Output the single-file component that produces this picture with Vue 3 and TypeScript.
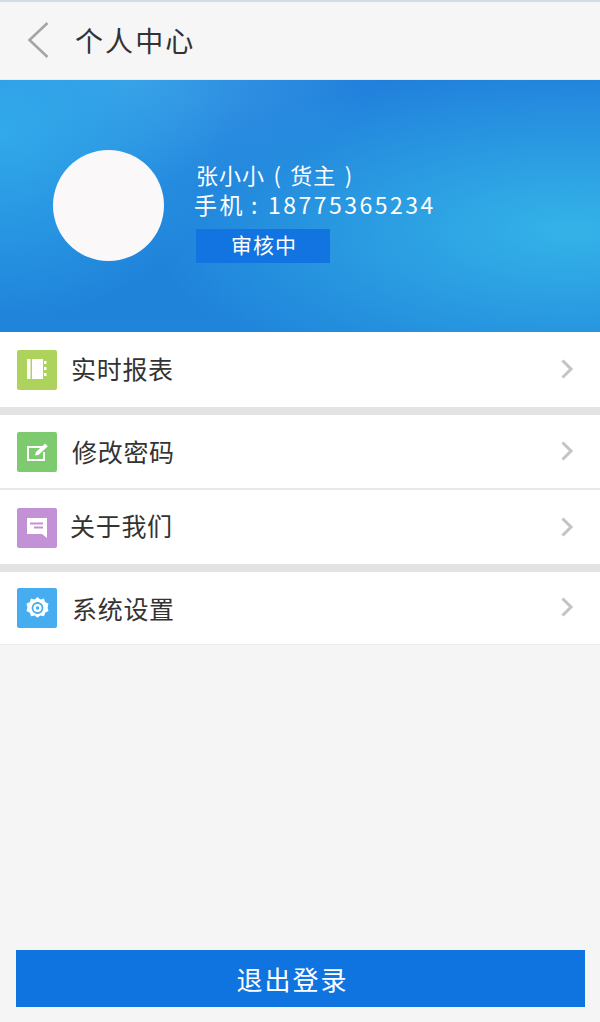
<template>
  <div class="page">
    <header class="topbar">
      <svg class="back" width="24" height="38" viewBox="0 0 24 38">
        <path d="M21.5 2 L3.5 19 L21.5 36" fill="none" stroke="#a3a6a6" stroke-width="2.6" />
      </svg>
      <h1 class="title">个人中心</h1>
    </header>

    <section class="hero">
      <div class="avatar"></div>
      <div class="info">
        <div class="name">张小小 ( 货主 )</div>
        <div class="phone">手机<span class="colon">:</span>18775365234</div>
        <div class="status">审核中</div>
      </div>
    </section>

    <ul class="menu">
      <li v-for="item in items" :key="item.label" class="row" :class="item.rowClass">
        <span class="icon" :style="{ background: item.color }">
          <svg v-if="item.icon === 'book'" width="40" height="40" viewBox="0 0 40 40">
            <path d="M10 9h3.500v20H10z M15 9h11v20H15z" fill="#fff" />
            <path d="M27 11h2.500v3H27z M27 17h2.500v3H27z M27 23h2.500v3H27z" fill="#fff" />
          </svg>
          <svg v-else-if="item.icon === 'edit'" width="40" height="40" viewBox="0 0 40 40">
            <path d="M25 15H11v13h16v-8" fill="none" stroke="#fff" stroke-width="2" />
            <path d="M18 23.500l1-3.500 9-8.500 2.800 2.700-9 8.500z" fill="#fff" />
          </svg>
          <svg v-else-if="item.icon === 'chat'" width="40" height="40" viewBox="0 0 40 40">
            <path d="M10 10h20v20l-5-4H10z" fill="#fff" />
            <path d="M13 14.500h13v2H13z M17 18.500h9v2h-9z" fill="#c391d6" />
          </svg>
          <svg v-else width="40" height="40" viewBox="0 0 40 40">
            <path d="M20.500 9l2.800 2.400 3.700-.9 1.100 3.600 3.400 1.600-.9 3.700.9 3.700-3.400 1.600-1.100 3.600-3.700-.9-2.800 2.400-2.800-2.400-3.700.9-1.100-3.600-3.400-1.600.9-3.700-.9-3.700 3.400-1.600 1.100-3.600 3.700.9z" fill="#fff" />
            <circle cx="20.500" cy="20" r="5" fill="none" stroke="#46aef0" stroke-width="1.800" />
            <circle cx="20.500" cy="20" r="1.700" fill="#46aef0" />
          </svg>
        </span>
        <span class="label" :style="{ marginLeft: item.gap + 'px', paddingBottom: item.lift + 'px' }">{{ item.label }}</span>
        <svg class="chevron" width="14" height="22" viewBox="0 0 14 22">
          <path d="M2.500 2.500L11 11l-8.500 8.500" fill="none" stroke="#c4c4c4" stroke-width="3" />
        </svg>
      </li>
    </ul>

    <div class="footer">
      <button class="logout" type="button">退出登录</button>
    </div>
  </div>
</template>

<script setup lang="ts">
interface MenuItem {
  label: string
  icon: 'book' | 'edit' | 'chat' | 'gear'
  color: string
  gap: number
  lift: number
  rowClass: string
}

const items: MenuItem[] = [
  { label: '实时报表', icon: 'book', color: '#aed35d', gap: 14, lift: 4, rowClass: 'row-first' },
  { label: '修改密码', icon: 'edit', color: '#7dcb6e', gap: 15, lift: 2, rowClass: 'row-second' },
  { label: '关于我们', icon: 'chat', color: '#c391d6', gap: 13, lift: 6, rowClass: 'row-third' },
  { label: '系统设置', icon: 'gear', color: '#46aef0', gap: 15, lift: 0, rowClass: 'row-last' },
]
</script>

<style>
html,
body {
  margin: 0;
  background: #f5f5f5;
}
</style>

<style scoped>
.page {
  display: flex;
  flex-direction: column;
  height: 1022px;
  overflow: hidden;
  background: #f5f5f5;
  font-family: "Noto Sans CJK SC", "Liberation Sans", sans-serif;
}

.topbar {
  display: flex;
  align-items: center;
  box-sizing: border-box;
  height: 80px;
  padding-left: 26px;
  padding-bottom: 1px;
  background: #f6f6f6;
  border-top: 2px solid #d3dde3;
  border-bottom: 1px solid #e8eff5;
}

.back {
  flex: none;
}

.title {
  margin: 0 0 0 25px;
  font-size: 28px;
  font-weight: 400;
  letter-spacing: 2.1px;
  color: #333;
}

.hero {
  display: flex;
  align-items: flex-start;
  box-sizing: border-box;
  height: 252px;
  padding: 70px 0 0 53px;
  background:
    radial-gradient(ellipse 420px 165px at 570px 150px, #34b3e8 0%, rgba(52, 179, 232, 0) 100%),
    radial-gradient(ellipse 230px 190px at 0 50px, #31aaea 0%, rgba(49, 170, 234, 0) 100%),
    radial-gradient(ellipse 240px 110px at 130px 0, #3a9de6 0%, rgba(58, 157, 230, 0) 100%),
    linear-gradient(180deg, #2180dc 0%, #1f84da 100%);
}

.avatar {
  flex: none;
  width: 111px;
  height: 111px;
  border-radius: 50%;
  background: #fbf8fa;
}

.info {
  display: flex;
  flex-direction: column;
  margin: 9px 0 0 30px;
  color: #fff;
}

.name {
  margin-left: 2px;
  font-size: 22px;
  line-height: 30px;
  letter-spacing: 1px;
  word-spacing: 2.500px;
  white-space: pre;
}

.phone {
  font-size: 23px;
  line-height: 31px;
  letter-spacing: 2.500px;
}

.colon {
  margin: 0 8px 0 6px;
}

.status {
  width: 134px;
  height: 34px;
  margin: 9px 0 0 2px;
  padding-left: 2px;
  box-sizing: border-box;
  background: #1274e0;
  font-size: 21px;
  line-height: 31px;
  letter-spacing: 1px;
  text-align: center;
}

.menu {
  margin: 0;
  padding: 0;
  list-style: none;
}

.row {
  display: flex;
  align-items: center;
  padding: 0 26px 0 17px;
  background: #fff;
}

.row-first {
  height: 75px;
  border-bottom: 8px solid #e3e3e3;
}

.row-second {
  height: 73px;
  border-bottom: 2px solid #e8e8e8;
}

.row-third {
  height: 72px;
  padding-top: 2px;
  border-bottom: 8px solid #e3e3e3;
}

.row-last {
  height: 72px;
  border-bottom: 1px solid #ececec;
}

.icon {
  display: flex;
  align-items: center;
  justify-content: center;
  flex: none;
  width: 40px;
  height: 40px;
  border-radius: 2px;
}

.label {
  flex: 1;
  font-size: 25px;
  letter-spacing: 0.700px;
  color: #333;
}

.chevron {
  flex: none;
  margin-bottom: 2px;
}

.footer {
  margin-top: auto;
  padding: 0 15px 15px 16px;
}

.logout {
  display: block;
  width: 100%;
  height: 57px;
  padding: 0 16px 0 0;
  border: none;
  border-radius: 0;
  background: #0f73e0;
  color: #fff;
  font-family: inherit;
  font-size: 26px;
  letter-spacing: 2px;
}
</style>
